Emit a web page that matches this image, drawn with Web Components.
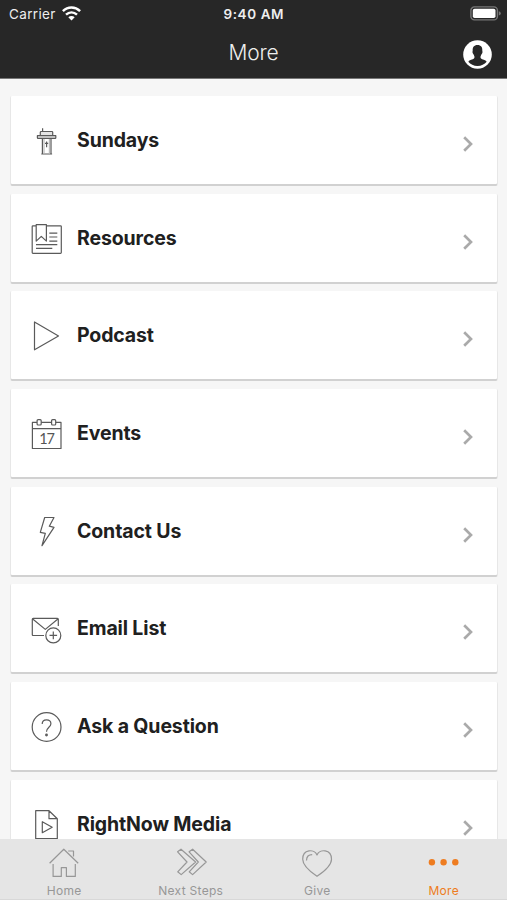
<!DOCTYPE html>
<html lang="en">
<head>
<meta charset="utf-8">
<title>More</title>
<style>
html,body{margin:0;height:100%;overflow:hidden}
body{font-family:Inter,"Liberation Sans",sans-serif;background:#f6f6f6}
</style>
</head>
<body>
<more-screen></more-screen>
<script>
const icons = {
  sundays: '<path fill="#e4e4e4" d="M9.3 10.6V7.3q0-.8.8-.8h10.8q.8 0 .8.8v3.3M6.4 10.7h18.4v2.1q0 .6-.6.6H7q-.6 0-.6-.6z"/><path d="M11.6 6.4V3.3M11.4 13.4V29M20 13.4V29M10.3 29h10.8"/><path stroke="#bbb" d="M13 14V28.4M18.4 14V28.4"/><path stroke-width="1.2" d="M15.6 16.4v5.8M14 18.3h3.2"/>',
  resources: '<path d="M5 2.8H2q-.8 0-.8.8v26q0 .8.8.8h27.5q.8 0 .8-.8v-26q0-.8-.8-.8H15.4M5.2 1.7h10.2v16.4l-5.1-4.7-5.1 4.7zM18.3 10.2h8M18.3 14h8M18.3 18.2h8M5 21.6h21.3M5 25.4h16.3"/>',
  podcast: '<path d="M3.5 2v27.8l24-13.9z"/>',
  events: '<path d="M6 4.4H1.4v26.1H30V4.4h-5.2M10.2 4.4h10.4M1.4 10.7H30"/><rect x="6.1" y="1.7" width="4.1" height="5.3" rx="1"/><rect x="20.6" y="1.7" width="4.1" height="5.3" rx="1"/><text x="15.6" y="25.6" text-anchor="middle" font-family="Lato,sans-serif" font-size="14.5" letter-spacing="-1" fill="#555" stroke="none">17</text>',
  contact: '<path d="M13.7 1.5H23l-4.7 8.7 4.7 1.1-12 18.4 3.3-12.3-5-1z"/>',
  email: '<path d="M13 22.5H2.2q-.9 0-.9-.9V6.3q0-.9.9-.9h24.2q.9 0 .9.9V13M1.7 6l12.6 10.4L26.9 6"/><circle cx="22.3" cy="22.4" r="7.5"/><path d="M22.3 18.6v7.6M18.5 22.4h7.6"/>',
  ask: '<circle cx="15.6" cy="16" r="14.4"/><path d="M11.2 13c0-2.7 1.8-4.2 4.3-4.2 2.6 0 4.4 1.6 4.4 3.9 0 3.5-4.4 3.6-4.4 8"/><circle cx="15.5" cy="24" r=".8" fill="#555"/>',
  media: '<path d="M4.7 1.7H18l8.3 8v20H4.7zM18 1.7v8h8.3M11.3 12.7v11l9.9-5.5z"/>',
  home: '<path d="M1.6 16.2L15.8 2.2l14.4 14M20.2 4h5.3v5.4M5.1 17v12.4h8.2v-8.8h5.1v8.8h8.9V17"/>',
  steps: '<path d="M2.6 4.8L6 2.2 20.6 15 6.2 27.6l-3.5-2.8L12 15zM14.1 4.8l3.5-2.6L31.2 15 17.6 27.6l-3.4-2.8L23.3 15z"/>',
  give: '<path d="M16 8C13.5 1.8 1.7 1.9 1.7 12.2 1.7 18.8 8.5 24.2 16 29.3 23.6 24.2 30.5 18.8 30.5 12.2 30.5 1.9 18.5 1.8 16 8zM5.5 13.4c.1-3.6 2.1-5.8 5.7-5.8"/>',
  more: '<g fill="currentColor" stroke="none"><circle cx="3.9" cy="15.2" r="3.2"/><circle cx="15.6" cy="15.2" r="3.2"/><circle cx="27.3" cy="15.2" r="3.2"/></g>'
};
const define = (name, render) => customElements.define(name, class extends HTMLElement {
  connectedCallback() {
    if (!this.shadowRoot) this.attachShadow({mode: 'open'}).innerHTML = render(this);
  }
});

define('line-icon', el => `<style>:host{display:block;width:32px;height:32px;flex:none}svg{display:block;overflow:visible}</style>
<svg width="32" height="32" viewBox="0 0 32 32" fill="none" stroke="currentColor" stroke-width="1.2" stroke-linejoin="round">${icons[el.getAttribute('name')]}</svg>`);

define('status-bar', () => `<style>
:host{display:grid;grid-template-columns:1fr auto 1fr;align-items:center;height:28px;padding:0 8px 0 9px;color:#eee;font-size:13.5px}
.left{display:flex;align-items:center;gap:6px;letter-spacing:.35px}
b{font-weight:600;letter-spacing:.6px;margin-right:.4px;font-size:13.5px}
.battery{justify-self:end;margin-right:-2px}svg{display:block;margin-top:-2px}
</style>
<div class="left"><span>Carrier</span><svg width="19" height="15" viewBox="0 0 19 15" fill="none" stroke="#fff" stroke-width="2.5"><path d="M.9 5.2c5-4.8 12.2-4.8 17.2 0M4 8.7c3.3-3 7.7-3 11 0"/><path d="M6.3 11.2c1.9-1.7 4.5-1.7 6.4 0l-3.2 3.3z" fill="#fff" stroke="none"/></svg></div>
<b>9:40 AM</b>
<svg class="battery" width="31" height="15" viewBox="0 0 31 15"><rect x=".9" y=".9" width="26.5" height="13" rx="3.5" fill="none" stroke="#777" stroke-width="1.4"/><rect x="2.8" y="2.8" width="22.7" height="9.2" rx="1.8" fill="#fff"/><path d="M28.8 5.2q2 .6 2 2.2t-2 2.2z" fill="#777"/></svg>`);

define('nav-header', () => `<style>
:host{display:block;height:78px;background:#272727;border-bottom:1px solid #777;color:#eee}
.bar{display:grid;grid-template-columns:1fr auto 1fr;height:50px;align-items:center;padding:0 15px}
h1{grid-column:2;margin:0;font-size:21px;font-weight:300;letter-spacing:-.15px;line-height:50px}
svg{justify-self:end;margin-top:3px;display:block}
</style><status-bar></status-bar>
<div class="bar"><h1><slot></slot></h1><svg width="29" height="29" viewBox="0 0 29 29"><circle cx="14.5" cy="14.5" r="14.3" fill="#fff"/><path fill="#272727" d="M14.5 5.1c-3.5 0-5 2.3-4.8 5.3 0 .9-.5 1.3 0 2.6.3 1 .8 1 1.2 2 .8 1.7.8 2.7.1 3.5-1 1.1-4.7 1.4-5.7 3.2 2.2 2.7 5.4 4.2 9.2 4.2s7-1.5 9.2-4.2c-1-1.8-4.7-2.1-5.7-3.2-.7-.8-.7-1.8.1-3.5.4-1 .9-1 1.2-2 .5-1.3 0-1.7 0-2.6.2-3-1.3-5.3-4.8-5.3z"/></svg></div>`);

define('menu-card', el => `<style>
:host{display:flex;align-items:flex-start;box-sizing:border-box;height:88px;flex:none;padding:29px 23px 0 20px;background:#fff;border-radius:1px;box-shadow:0 1px 0 1px rgba(0,0,0,.06),0 2px 0 rgba(0,0,0,.09);color:#5a5a5a}
.label{flex:1;margin-left:14px;color:#202020;font-size:19.5px;font-weight:650;line-height:30px;white-space:nowrap;letter-spacing:-.13px}
.chevron{display:block;margin-top:11px}
</style><line-icon name="${el.getAttribute('icon')}"></line-icon><span class="label"><slot></slot></span>
<svg class="chevron" width="12" height="16" viewBox="0 0 12 16" fill="none" stroke="#aaa" stroke-width="2.7"><path d="M2.2 1.2L9 8l-6.8 6.8"/></svg>`);

define('tab-item', el => `<style>
:host{display:flex;flex-direction:column;align-items:center;padding:8px 0 0 0;color:#979797;font-size:12px;line-height:16px;letter-spacing:.3px}
:host([active]){color:#ee7c20}
span{margin-top:4px}
</style><line-icon name="${el.getAttribute('icon')}"></line-icon><span><slot></slot></span>`);

define('tab-bar', () => `<style>:host{display:grid;grid-template-columns:repeat(4,1fr);box-sizing:border-box;height:61px;flex:none;background:#e5e5e5;border-bottom:1px solid #d8d8d8;padding-left:1px}</style><slot></slot>`);

define('more-screen', () => `<style>
:host{display:flex;flex-direction:column;width:507px;height:900px;background:#f6f6f6}
nav-header{flex:none}
main{flex:1;min-height:0;overflow:hidden;display:flex;flex-direction:column;gap:9.7px;padding:17px 10px 0 11px}
</style>
<nav-header>More</nav-header>
<main>
<menu-card icon="sundays">Sundays</menu-card>
<menu-card icon="resources">Resources</menu-card>
<menu-card icon="podcast">Podcast</menu-card>
<menu-card icon="events">Events</menu-card>
<menu-card icon="contact">Contact Us</menu-card>
<menu-card icon="email">Email List</menu-card>
<menu-card icon="ask">Ask a Question</menu-card>
<menu-card icon="media">RightNow Media</menu-card>
</main>
<tab-bar><tab-item icon="home">Home</tab-item><tab-item icon="steps">Next Steps</tab-item><tab-item icon="give">Give</tab-item><tab-item icon="more" active>More</tab-item></tab-bar>`);
</script>
</body>
</html>
